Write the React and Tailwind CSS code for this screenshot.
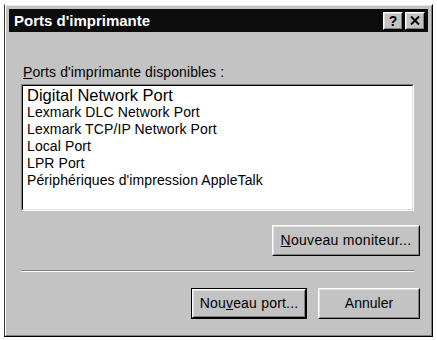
export default function App() {
  const font = { fontFamily: '"Liberation Sans", Arial, sans-serif' };
  const btnOuter =
    "border border-t-white border-l-white border-r-black border-b-black";
  const btnInner =
    "h-full w-full border border-t-[#dfdfdf] border-l-[#dfdfdf] border-r-[#808080] border-b-[#808080] flex items-center justify-center text-[14px] text-black";
  return (
    <div className="w-[437px] h-[340px] bg-white pl-[4px] pt-[4px]" style={font}>
      <div className="w-[429px] h-[333px] border border-t-white border-l-[#3a3a3a] border-r-black border-b-black">
        <div className="h-full w-full border border-t-[#e6e6e6] border-l-white border-r-[#808080] border-b-[#808080] bg-[#c3c3c3] p-[3px] flex flex-col">
          {/* title bar */}
          <div className="h-[23px] bg-[#0c0c0c] flex items-center justify-between pl-[5px] pr-[3px]">
            <span className="text-white font-bold text-[15px] leading-none">Ports d'imprimante</span>
            <div className="flex gap-[2px]">
              <div className={"w-[20px] h-[18px] " + btnOuter}>
                <div className="h-full w-full border border-t-[#dfdfdf] border-l-[#dfdfdf] border-r-[#808080] border-b-[#808080] bg-[#c3c3c3] flex items-center justify-center text-[14px] font-bold leading-none text-black">?</div>
              </div>
              <div className={"w-[20px] h-[18px] " + btnOuter}>
                <div className="h-full w-full border border-t-[#dfdfdf] border-l-[#dfdfdf] border-r-[#808080] border-b-[#808080] bg-[#c3c3c3] flex items-center justify-center">
                  <svg width="10" height="9" viewBox="0 0 10 9">
                    <path d="M1 0.5 L9 8.5 M9 0.5 L1 8.5" stroke="black" strokeWidth="2" />
                  </svg>
                </div>
              </div>
            </div>
          </div>
          {/* body */}
          <div className="flex flex-col pl-[12px] pr-[8px]">
            <div className="mt-[32px] text-[14px] leading-[16px] tracking-[0.1px] text-black pl-[2px]">
              <span className="underline">P</span>orts d'imprimante disponibles :
            </div>
            <div className="mt-[4px] w-[393px] h-[127px] border border-t-[#808080] border-l-[#808080] border-r-white border-b-white">
              <div className="h-full w-full border border-t-black border-l-black border-r-[#dfdfdf] border-b-[#dfdfdf] bg-white pl-[4px] text-black">
                <div className="text-[16.5px] leading-[18px]">Digital Network Port</div>
                <div className="text-[14px] leading-[17px] tracking-[0.1px]">Lexmark DLC Network Port</div>
                <div className="text-[14px] leading-[17px] tracking-[0.1px]">Lexmark TCP/IP Network Port</div>
                <div className="text-[14px] leading-[17px] tracking-[0.1px]">Local Port</div>
                <div className="text-[14px] leading-[17px] tracking-[0.1px]">LPR Port</div>
                <div className="text-[14px] leading-[17px] tracking-[0.1px]">Périphériques d'impression AppleTalk</div>
              </div>
            </div>
            <div className="mt-[14px] flex justify-end">
              <div className={"w-[148px] h-[31px] " + btnOuter}>
                <div className={btnInner}>
                  <span className="tracking-[0.3px]"><span className="underline">N</span>ouveau moniteur...</span>
                </div>
              </div>
            </div>
            <div className="mt-[14px] w-[393px] h-[2px] border-t border-t-[#808080] border-b border-b-white"></div>
            <div className="mt-[16px] flex justify-end gap-[11px]">
              <div className="w-[116px] h-[31px] border border-black">
                <div className={"h-full w-full " + btnOuter}>
                  <div className={btnInner}>
                    <span className="tracking-[0.2px]">Nou<span className="underline">v</span>eau port...</span>
                  </div>
                </div>
              </div>
              <div className={"w-[102px] h-[31px] " + btnOuter}>
                <div className={btnInner}>Annuler</div>
              </div>
            </div>
          </div>
        </div>
      </div>
    </div>
  );
}
